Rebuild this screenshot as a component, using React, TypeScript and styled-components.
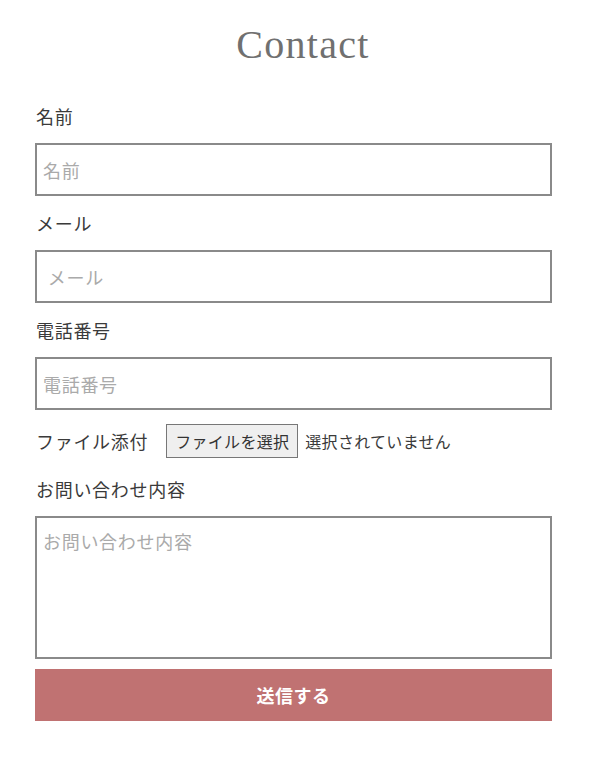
import { styled, createGlobalStyle } from "styled-components";

const GlobalStyle = createGlobalStyle`
  * {
    box-sizing: border-box;
  }
  body {
    margin: 0;
    background: #fff;
    font-family: "Noto Sans CJK JP", "Noto Sans", sans-serif;
    color: #333;
  }
`;

const fields = [
  { label: "名前", placeholder: "名前" },
  { label: "メール", placeholder: " メール" },
  { label: "電話番号", placeholder: "電話番号" },
];

export default function App() {
  return (
    <SWrap>
      <GlobalStyle />
      <STitle>Contact</STitle>
      <SForm onSubmit={(e) => e.preventDefault()}>
        {fields.map(({ label, placeholder }) => (
          <SField key={label}>
            <SLabel>{label}</SLabel>
            <SInput type="text" placeholder={placeholder} />
          </SField>
        ))}
        <SFileRow>
          <SLabel>ファイル添付</SLabel>
          <SFileButton type="button">ファイルを選択</SFileButton>
          <SFileName>選択されていません</SFileName>
        </SFileRow>
        <SField>
          <SLabel>お問い合わせ内容</SLabel>
          <STextArea placeholder="お問い合わせ内容" />
        </SField>
        <SSubmit type="submit">送信する</SSubmit>
      </SForm>
    </SWrap>
  );
}

const SWrap = styled.div`
  width: 599px;
  padding: 20px 48px 40px 35px;
`;

const STitle = styled.h1`
  margin: 0;
  text-align: center;
  font-family: "Liberation Serif", "DejaVu Serif", serif;
  font-weight: 400;
  font-size: 40px;
  line-height: 50px;
  color: #707070;
  letter-spacing: 1.3px;
  padding-left: 20px;
`;

const SForm = styled.form`
  display: flex;
  flex-direction: column;
  width: 517px;
  margin-top: 33px;
`;

const SField = styled.div`
  display: flex;
  flex-direction: column;
`;

const SLabel = styled.label`
  font-size: 18px;
  line-height: 26px;
  letter-spacing: 0.7px;
  color: #3a3a3a;
  margin: 0 0 14px 1px;
`;

const SInput = styled.input`
  height: 53px;
  border: 2px solid #8a8a8a;
  padding: 0 6px;
  font-family: inherit;
  font-size: 18px;
  letter-spacing: 0.7px;
  color: #333;
  margin-bottom: 14px;
  outline: none;

  &::placeholder {
    color: #aaa;
  }
`;

const SFileRow = styled.div`
  display: flex;
  align-items: center;
  height: 34px;
  margin-bottom: 18px;

  > label {
    margin: 0 18px 0 1px;
  }
`;

const SFileButton = styled.button`
  height: 34px;
  padding: 0 8px;
  background: #efefef;
  border: 1px solid #777;
  border-radius: 0;
  font-family: inherit;
  font-size: 16px;
  letter-spacing: 0.3px;
  color: #333;
`;

const SFileName = styled.span`
  margin-left: 7px;
  font-size: 16px;
  letter-spacing: 0.3px;
  color: #3a3a3a;
`;

const STextArea = styled.textarea`
  height: 143px;
  border: 2px solid #8a8a8a;
  padding: 10px 6px;
  font-family: inherit;
  font-size: 18px;
  letter-spacing: 0.7px;
  line-height: 26px;
  resize: none;
  outline: none;

  &::placeholder {
    color: #aaa;
  }
`;

const SSubmit = styled.button`
  margin-top: 10px;
  height: 52px;
  border: none;
  background: #c07272;
  color: #fff;
  font-family: inherit;
  font-weight: 700;
  font-size: 18px;
  letter-spacing: 0.5px;
  cursor: pointer;
`;
